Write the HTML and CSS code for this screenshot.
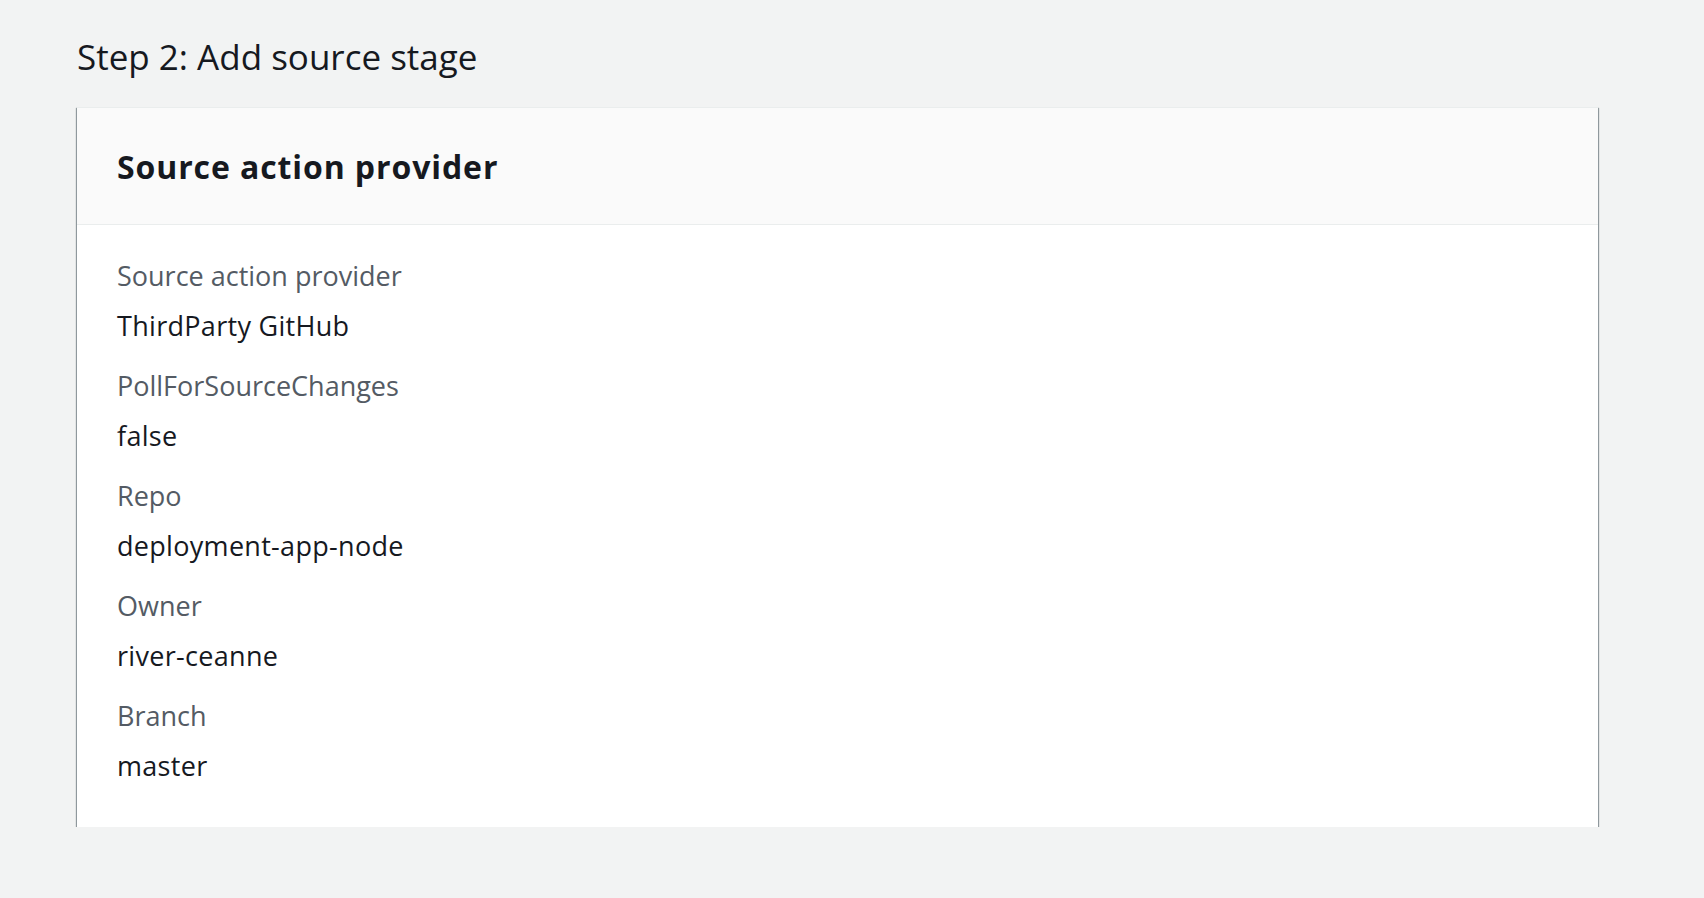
FILE: index.html
```html
<!DOCTYPE html>
<html lang="en">
<head>
<meta charset="utf-8">
<title>Step 2: Add source stage</title>
<link rel="stylesheet" href="styles.css">
</head>
<body>
<main class="page">
  <h1 class="page-title">Step 2: Add source stage</h1>
  <section class="card">
    <header class="card-header">
      <h2 class="card-title">Source action provider</h2>
    </header>
    <dl class="card-body">
      <div class="kv">
        <dt class="kv-label">Source action provider</dt>
        <dd class="kv-value">ThirdParty GitHub</dd>
      </div>
      <div class="kv">
        <dt class="kv-label">PollForSourceChanges</dt>
        <dd class="kv-value">false</dd>
      </div>
      <div class="kv">
        <dt class="kv-label">Repo</dt>
        <dd class="kv-value">deployment-app-node</dd>
      </div>
      <div class="kv">
        <dt class="kv-label">Owner</dt>
        <dd class="kv-value">river-ceanne</dd>
      </div>
      <div class="kv">
        <dt class="kv-label">Branch</dt>
        <dd class="kv-value">master</dd>
      </div>
    </dl>
  </section>
</main>
</body>
</html>
```

FILE: styles.css
```css
html, body {
  margin: 0;
  padding: 0;
  background: #f2f3f3;
}

body {
  font-family: "Open Sans", "Noto Sans", "Liberation Sans", sans-serif;
  color: #16191f;
}

.page {
  padding: 35px 106px 0 77px;
}

.page-title {
  margin: 0 0 28px 0;
  font-size: 35px;
  line-height: 44px;
  font-weight: 400;
  color: #16191f;
}

.card {
  background: #ffffff;
  border-top: 1px solid #eaeded;
  box-shadow: 0 1px 1px 0 rgba(0, 28, 36, 0.55),
              0 2px 2px 0 rgba(0, 28, 36, 0.2),
              1px 1px 1px 0 rgba(0, 28, 36, 0.3),
              -1px 1px 1px 0 rgba(0, 28, 36, 0.3);
}

.card-header {
  background: #fafafa;
  border-bottom: 1px solid #eaeded;
  padding: 39px 40px 37px 40px;
}

.card-title {
  margin: 0;
  font-size: 32px;
  line-height: 40px;
  font-weight: 700;
  letter-spacing: 0.9px;
  color: #16191f;
}

.card-body {
  margin: 0;
  padding: 33px 40px 43px 40px;
  display: flex;
  flex-direction: column;
  gap: 24px;
}

.kv {
  display: flex;
  flex-direction: column;
  gap: 14px;
}

.kv-label {
  margin: 0;
  font-size: 27px;
  line-height: 36px;
  color: #545b64;
}

.kv-value {
  margin: 0;
  font-size: 27px;
  line-height: 36px;
  letter-spacing: 0.3px;
  color: #16191f;
}
```
